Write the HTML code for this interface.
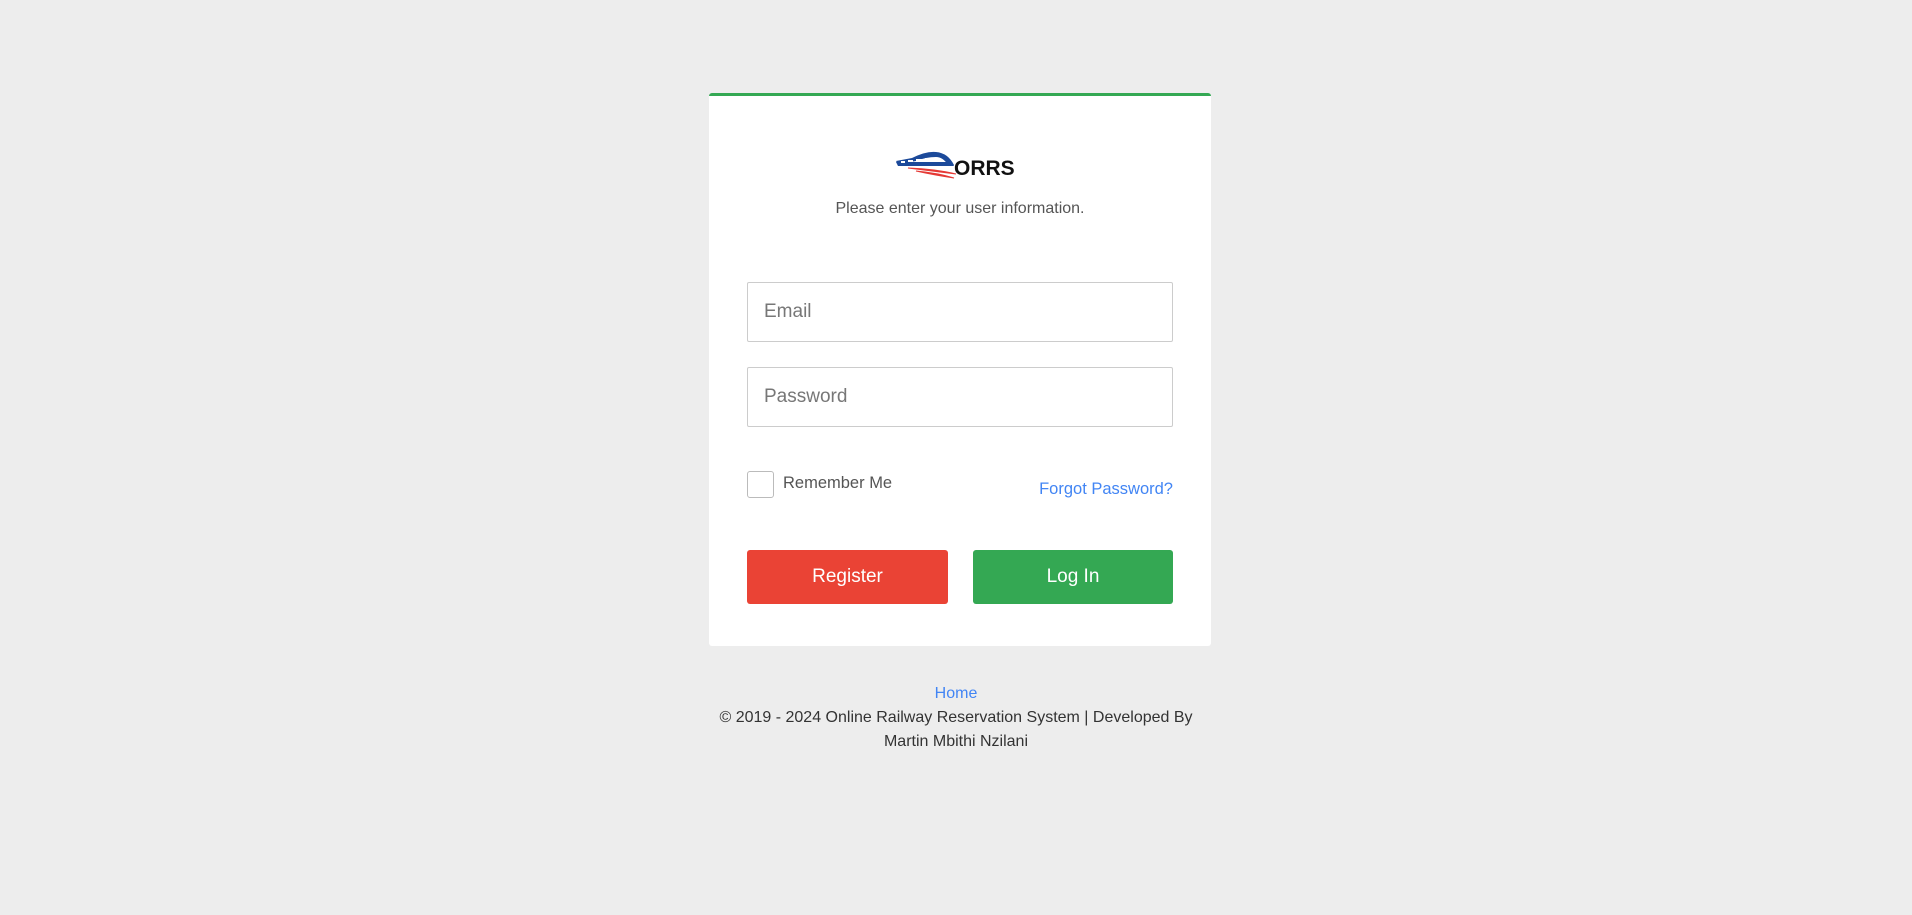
<!DOCTYPE html>
<html><head><meta charset="utf-8"><style>
html,body{margin:0;padding:0;background:#ededed;width:1912px;height:915px;overflow:hidden;font-family:"Liberation Sans",Arial,sans-serif;}
.card{position:absolute;left:709px;top:93px;width:502px;height:553px;background:#fff;border-top:3px solid #34a853;border-radius:3px;box-sizing:border-box;}
.logo{position:absolute;left:187px;top:55px;}
.sub{position:absolute;left:0;width:100%;top:104px;text-align:center;font-size:16px;color:#555;}
.inp{position:absolute;left:38px;width:426px;height:60px;border:1px solid #ccc;border-radius:2px;box-sizing:border-box;font-size:19px;color:#777;padding-left:16px;line-height:58px;}
.cb{position:absolute;left:38px;top:375px;width:27px;height:27px;border:1px solid #bbb;border-radius:3px;box-sizing:border-box;}
.rm{position:absolute;left:74px;top:378px;font-size:16.5px;color:#555;}
.fp{position:absolute;right:38px;top:384px;font-size:16.5px;color:#4285f4;}
.btn{position:absolute;top:454px;height:54px;border-radius:3px;color:#fff;font-size:19px;text-align:center;line-height:54px;}
.foot{position:absolute;left:0;width:1912px;top:682px;text-align:center;font-size:16px;line-height:24px;color:#333;}
</style></head><body>
<div class="card">
<svg class="logo" width="135" height="28" viewBox="0 0 135 28">
<path d="M0 10 L16 7 Q30 0 40 1 Q52 2 58 14 L52 14 Q47 6 40 6 Q30 6 20 10 L2 13 Z" fill="#1c4a9a"/>
<path d="M0 11 L56 11 L58 15 L2 15 Z" fill="#1c4a9a"/>
<path d="M5 11 h4 M12 10 h5 M20 9 h6 M29 8 h6" stroke="#fff" stroke-width="2"/>
<path d="M12 17 Q40 18 60 23 Q36 20 12 17Z M20 20 Q42 22 58 27 Q38 24 20 20Z" fill="#e53935" stroke="#e53935" stroke-width="1"/>
<text x="58" y="24" font-family="Liberation Sans,sans-serif" font-weight="bold" font-size="21" fill="#111">ORRS</text>
</svg>
<div class="sub">Please enter your user information.</div>
<div class="inp" style="top:186px">Email</div>
<div class="inp" style="top:271px">Password</div>
<div class="cb"></div><div class="rm">Remember Me</div>
<div class="fp">Forgot Password?</div>
<div class="btn" style="left:38px;width:201px;background:#ea4335">Register</div>
<div class="btn" style="left:264px;width:200px;background:#34a853">Log In</div>
</div>
<div class="foot"><span style="color:#4285f4">Home</span><br>© 2019 - 2024 Online Railway Reservation System | Developed By<br>Martin Mbithi Nzilani</div>
</body></html>
